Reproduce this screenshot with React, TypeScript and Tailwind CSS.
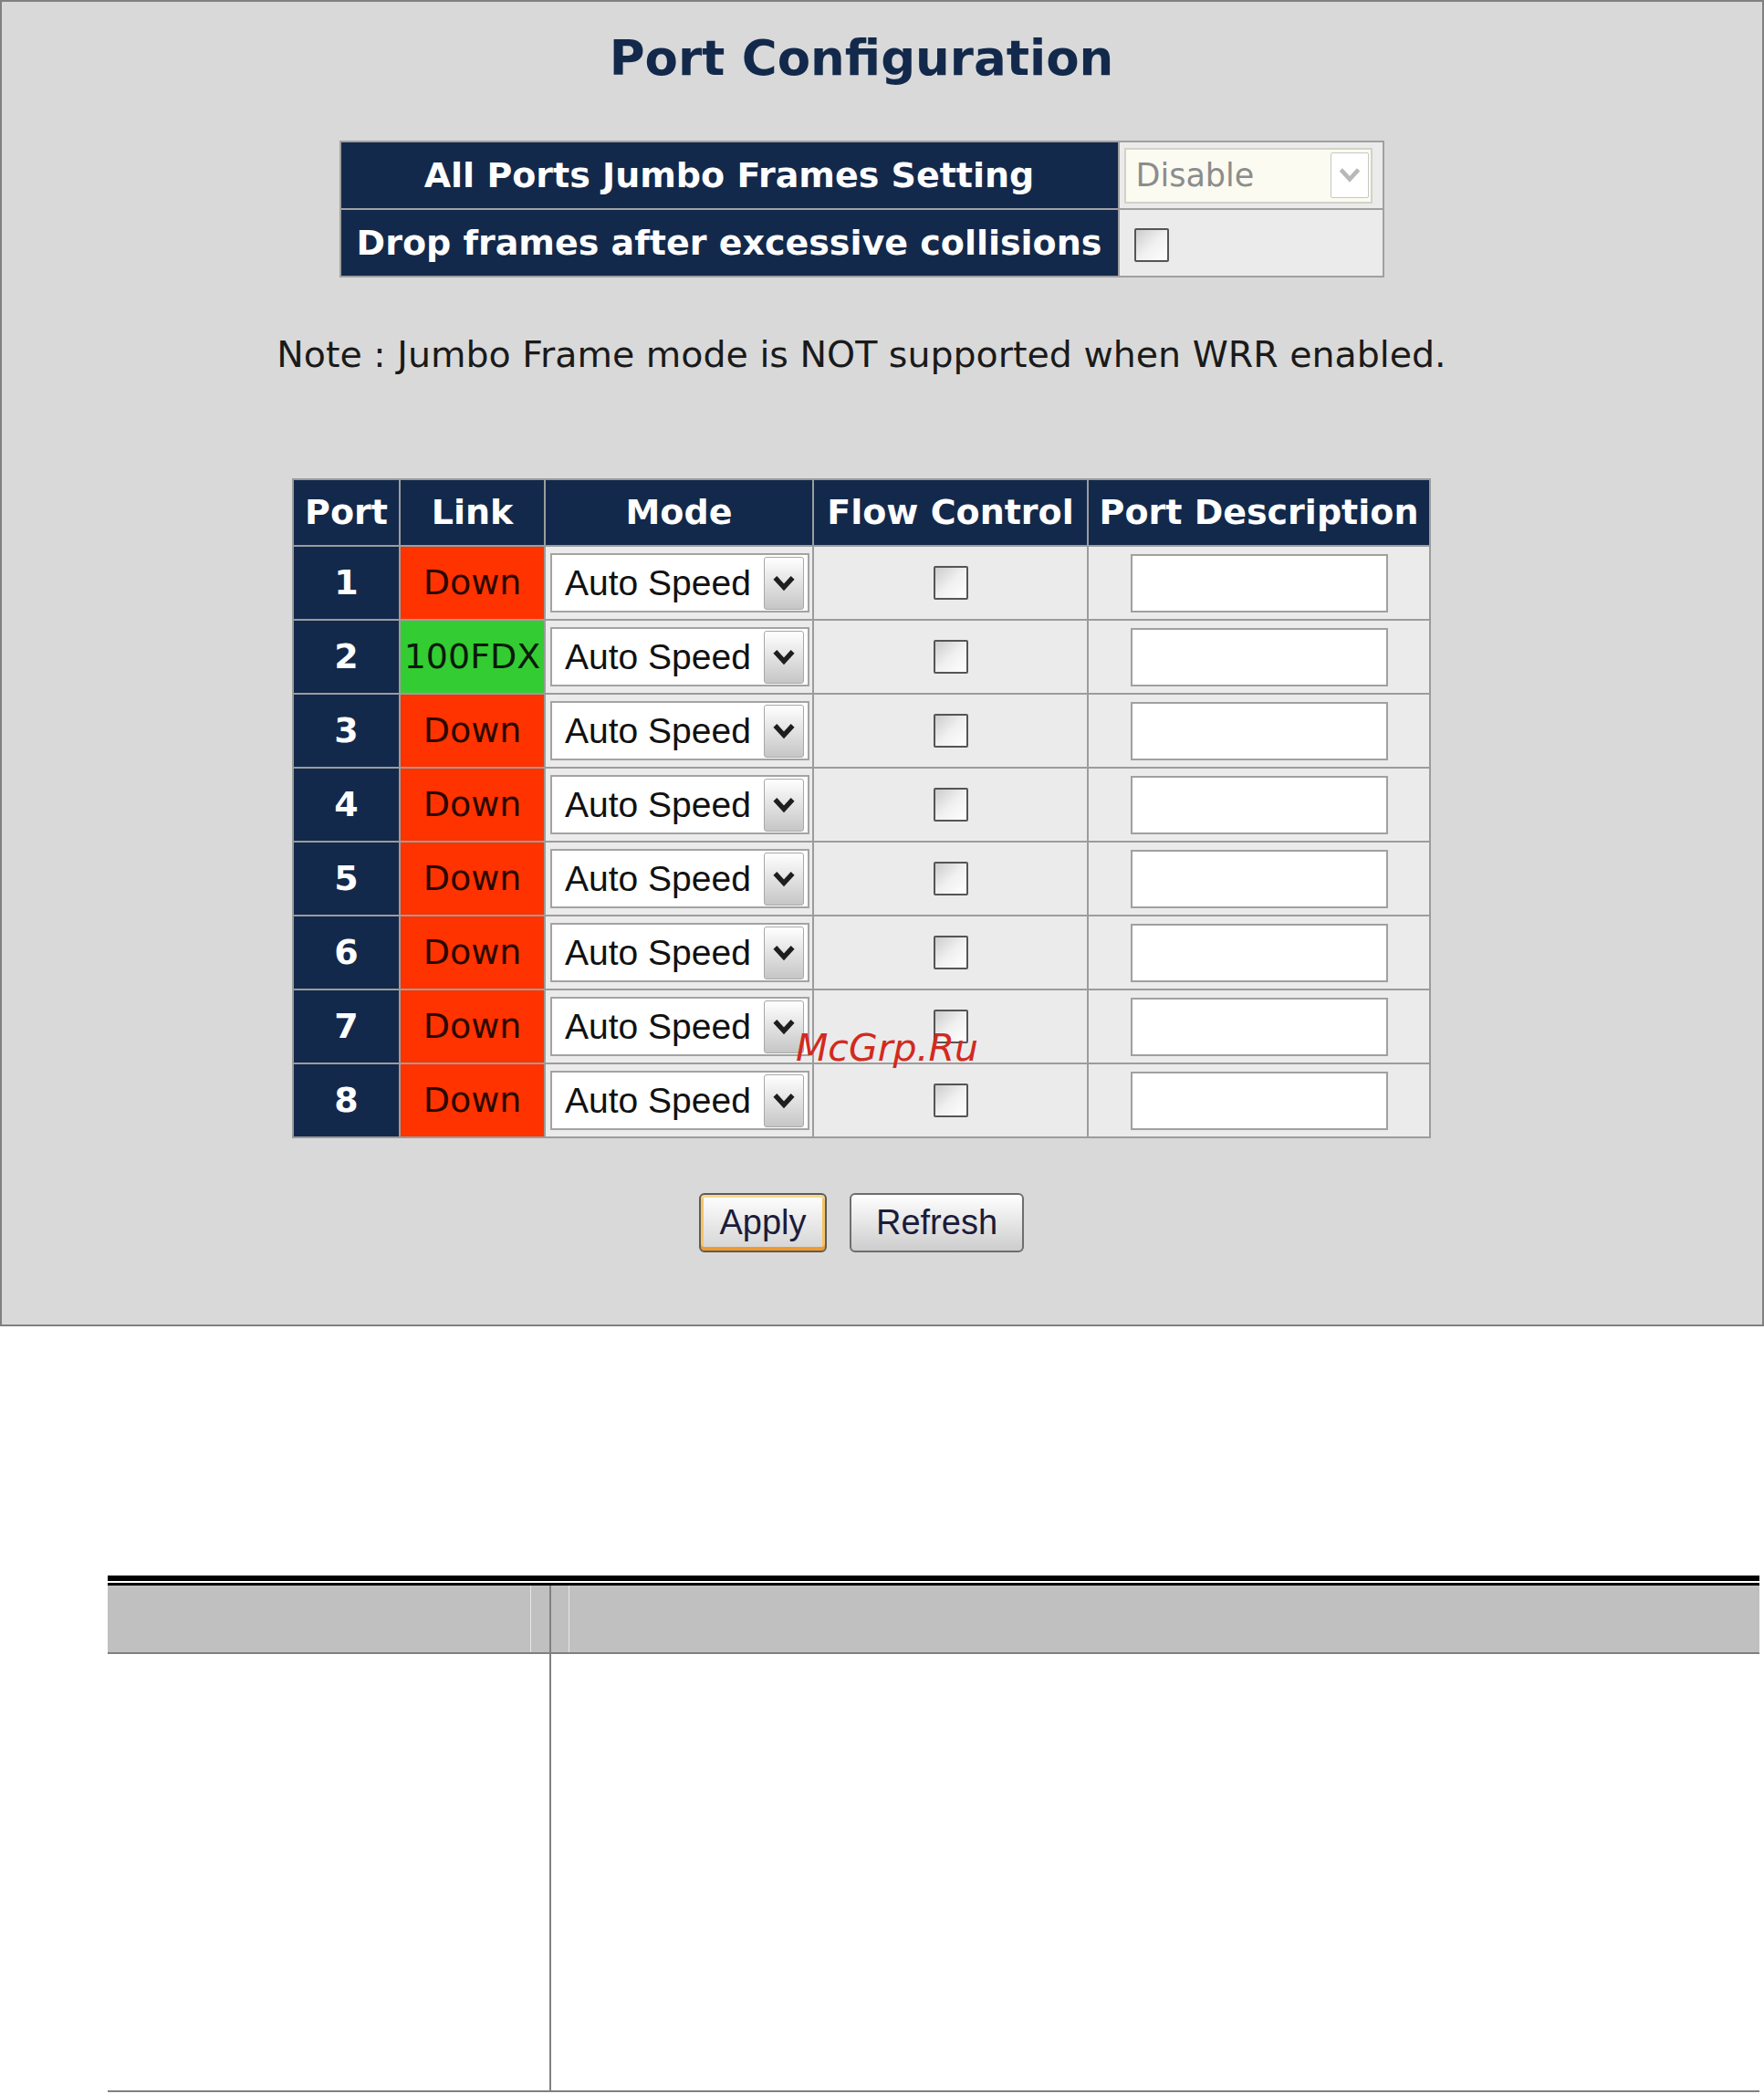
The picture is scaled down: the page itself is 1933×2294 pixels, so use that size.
import React from "react";

const ports = [
  { id: 1, link: "Down" },
  { id: 2, link: "100FDX" },
  { id: 3, link: "Down" },
  { id: 4, link: "Down" },
  { id: 5, link: "Down" },
  { id: 6, link: "Down" },
  { id: 7, link: "Down" },
  { id: 8, link: "Down" },
];

const verdana = { fontFamily: '"DejaVu Sans", Verdana, sans-serif' };
const arial = { fontFamily: '"Liberation Sans", Arial, sans-serif' };

function Chevron({ className, width = 3 }: { className?: string; width?: number }) {
  return (
    <svg viewBox="0 0 16 16" className={className}>
      <path d="M2.5 4.5 L8 10.5 L13.5 4.5" fill="none" stroke="currentColor" strokeWidth={width} />
    </svg>
  );
}

function Checkbox() {
  return (
    <div className="w-[38px] h-[37px] border-2 border-[#555] rounded-[2px] bg-linear-to-br from-[#cccccc] via-[#f0f0f0] to-white" />
  );
}

function ModeSelect() {
  return (
    <div className="w-[284px] h-[65px] border-2 border-[#a3a3a3] bg-white flex items-center pl-[14px] pr-[4px]" style={arial}>
      <span className="flex-1 text-[39px] leading-none text-[#111]">Auto Speed</span>
      <div className="w-[44px] h-[58px] border border-[#a8a8a8] rounded-[3px] bg-linear-to-b from-white to-[#c6c6c6] flex items-center justify-center text-[#1e1e1e]">
        <Chevron className="w-[28px] h-[28px]" />
      </div>
    </div>
  );
}

function HeadCell({ children }: { children: React.ReactNode }) {
  return (
    <div className="bg-[#13294b] text-white font-bold text-[38px] flex items-center justify-center whitespace-nowrap">
      {children}
    </div>
  );
}

export default function App() {
  return (
    <div className="w-[1933px] h-[2294px] bg-white relative" style={verdana}>
      {/* config panel */}
      <div className="h-[1453px] border-2 border-[#808080] bg-[#d9d9d9] pr-[45px] flex flex-col items-center">
        <h1 className="mt-[30px] h-[64px] leading-[64px] text-[53px] font-bold text-[#13294b]">Port Configuration</h1>

        {/* global settings */}
        <div className="mt-[58px] grid grid-cols-[851px_288px] grid-rows-[72px_72px] gap-[2px] p-[2px] bg-[#a0a0a0]">
          <HeadCell>All Ports Jumbo Frames Setting</HeadCell>
          <div className="bg-[#ebebeb] flex items-center pl-[5px]">
            <div className="w-[272px] h-[61px] border-2 border-[#d2d2c8] bg-[#fbfbf1] flex items-center pl-[11px] pr-[2px]">
              <span className="flex-1 text-[35px] leading-none text-[#8c8c8c]">Disable</span>
              <div className="w-[42px] h-[50px] border border-[#c6c6c6] rounded-[2px] bg-white flex items-center justify-center text-[#b8b8b8]">
                <Chevron className="w-[28px] h-[28px]" width={2.6} />
              </div>
            </div>
          </div>
          <HeadCell>Drop frames after excessive collisions</HeadCell>
          <div className="bg-[#ebebeb] flex items-center pl-[16px] pt-[4px]">
            <Checkbox />
          </div>
        </div>

        <p className="mt-[61px] h-[46px] leading-[46px] text-[39.5px] text-[#1a1a1a] whitespace-nowrap">
          Note : Jumbo Frame mode is NOT supported when WRR enabled.
        </p>

        {/* port table */}
        <div className="mt-[113px] grid grid-cols-[115px_157px_292px_299px_373px] auto-rows-[79px] grid-rows-[71px] gap-[2px] p-[2px] bg-[#9c9c9c]">
          <HeadCell>Port</HeadCell>
          <HeadCell>Link</HeadCell>
          <HeadCell>Mode</HeadCell>
          <HeadCell>Flow Control</HeadCell>
          <HeadCell>Port Description</HeadCell>
          {ports.map((p) => (
            <React.Fragment key={p.id}>
              <div className="bg-[#13294b] text-white font-bold text-[38px] flex items-center justify-center">{p.id}</div>
              <div
                className={
                  p.link === "Down"
                    ? "bg-[#ff3300] text-[#2a0800] text-[38px] flex items-center justify-center"
                    : "bg-[#33cc33] text-[#0a1a0a] text-[38px] flex items-center justify-center"
                }
              >
                {p.link}
              </div>
              <div className="bg-[#ebebeb] flex items-center pl-[5px]">
                <ModeSelect />
              </div>
              <div className="bg-[#ebebeb] flex items-center justify-center">
                <Checkbox />
              </div>
              <div className="bg-[#ebebeb] flex items-center justify-center">
                <div className="w-[282px] h-[64px] border-2 border-[#a0a0a0] bg-white" />
              </div>
            </React.Fragment>
          ))}
        </div>

        {/* actions */}
        <div className="mt-[60px] flex gap-[25px]" style={arial}>
          <button className="w-[140px] h-[65px] rounded-[6px] border-2 border-[#5c5c5c] bg-linear-to-b from-white to-[#d4d4d4] shadow-[inset_0_3px_0_#f7d98c,inset_0_-4px_0_#ef9a2c,inset_3px_0_0_#f4c468,inset_-3px_0_0_#f4c468] text-[38px] text-[#1c1c3a]">
            Apply
          </button>
          <button className="w-[191px] h-[65px] rounded-[6px] border-2 border-[#6e6e6e] bg-linear-to-b from-white to-[#cdcdcd] text-[38px] text-[#1c1c3a]">
            Refresh
          </button>
        </div>
      </div>

      {/* watermark */}
      <span className="absolute left-[872px] top-[1124px] text-[41px] italic text-[#d22a1e] leading-[48px]">McGrp.Ru</span>

      {/* parameter table (empty) */}
      <div className="ml-[118px] mt-[273px] w-[1810px]">
        <div className="h-[6px] bg-black" />
        <div className="h-[2px]" />
        <div className="h-[3px] bg-black" />
        <div className="h-[73px] bg-[#c0c0c0] flex">
          <div className="w-[463px]" />
          <div className="w-[21px] border-l border-[#e6e6e6]" />
          <div className="w-[2px] bg-[#808080]" />
          <div className="w-[20px] border-r border-[#e6e6e6]" />
        </div>
        <div className="h-[2px] bg-[#808080]" />
        <div className="h-[478px] flex">
          <div className="w-[486px] border-r-2 border-[#808080]" />
        </div>
        <div className="h-[2px] bg-[#808080]" />
      </div>
    </div>
  );
}
